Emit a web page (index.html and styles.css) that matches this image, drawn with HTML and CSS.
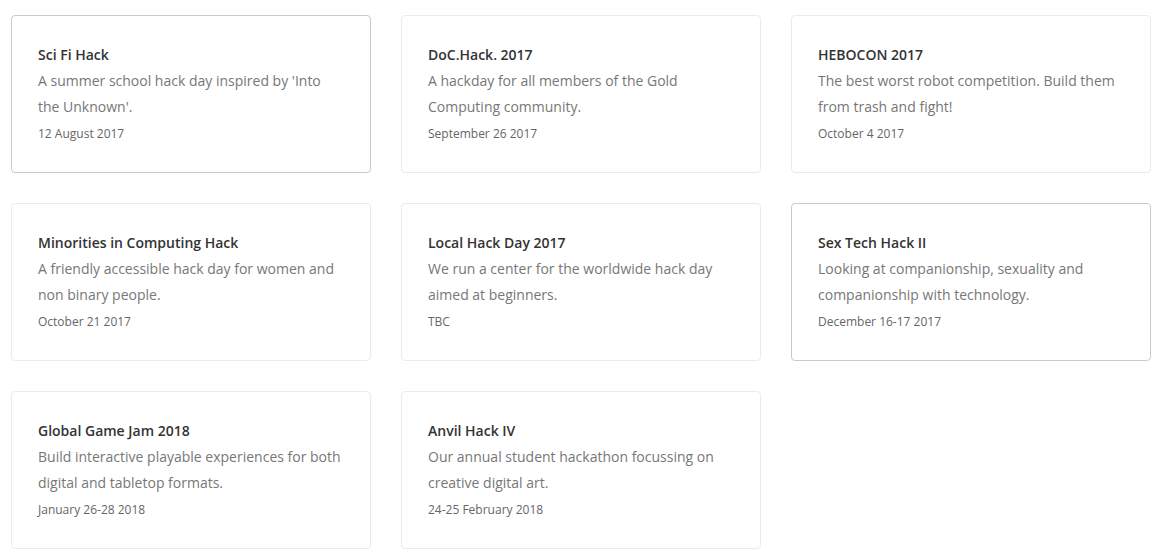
FILE: index.html
```html
<!DOCTYPE html>
<html lang="en">
<head>
<meta charset="utf-8">
<title>Events</title>
<link rel="stylesheet" href="styles.css">
</head>
<body>
<div class="grid">
  <div class="card card--active">
    <h3 class="card-title">Sci Fi Hack</h3>
    <p class="card-desc">A summer school hack day inspired by 'Into the Unknown'.</p>
    <p class="card-date">12 August 2017</p>
  </div>
  <div class="card">
    <h3 class="card-title">DoC.Hack. 2017</h3>
    <p class="card-desc">A hackday for all members of the Gold Computing community.</p>
    <p class="card-date">September 26 2017</p>
  </div>
  <div class="card">
    <h3 class="card-title">HEBOCON 2017</h3>
    <p class="card-desc">The best worst robot competition. Build them from trash and fight!</p>
    <p class="card-date">October 4 2017</p>
  </div>
  <div class="card">
    <h3 class="card-title">Minorities in Computing Hack</h3>
    <p class="card-desc">A friendly accessible hack day for women and non binary people.</p>
    <p class="card-date">October 21 2017</p>
  </div>
  <div class="card">
    <h3 class="card-title">Local Hack Day 2017</h3>
    <p class="card-desc">We run a center for the worldwide hack day aimed at beginners.</p>
    <p class="card-date">TBC</p>
  </div>
  <div class="card card--active">
    <h3 class="card-title">Sex Tech Hack II</h3>
    <p class="card-desc">Looking at companionship, sexuality and companionship with technology.</p>
    <p class="card-date">December 16-17 2017</p>
  </div>
  <div class="card">
    <h3 class="card-title">Global Game Jam 2018</h3>
    <p class="card-desc">Build interactive playable experiences for both digital and tabletop formats.</p>
    <p class="card-date">January 26-28 2018</p>
  </div>
  <div class="card">
    <h3 class="card-title">Anvil Hack IV</h3>
    <p class="card-desc">Our annual student hackathon focussing on creative digital art.</p>
    <p class="card-date">24-25 February 2018</p>
  </div>
</div>
</body>
</html>
```

FILE: styles.css
```css
html, body {
  margin: 0;
  padding: 0;
  background: #ffffff;
}

body {
  font-family: "Open Sans", "Liberation Sans", sans-serif;
  -webkit-font-smoothing: antialiased;
}

.grid {
  display: grid;
  grid-template-columns: repeat(3, 360px);
  grid-auto-rows: 158px;
  gap: 30px;
  padding: 15px 0 0 11px;
}

.card {
  box-sizing: border-box;
  border: 1px solid #ebebeb;
  border-radius: 4px;
  padding: 26px 26px 25px;
  background: #fff;
}

.card--active {
  border-color: #cacaca;
}

.card-title {
  margin: 0;
  font-size: 14px;
  font-weight: 600;
  line-height: 26px;
  color: #333333;
}

.card-desc {
  margin: 0;
  font-size: 14px;
  line-height: 26px;
  color: #777777;
}

.card-date {
  margin: 0;
  padding-top: 1px;
  font-size: 12px;
  line-height: 26px;
  color: #666666;
}
```
